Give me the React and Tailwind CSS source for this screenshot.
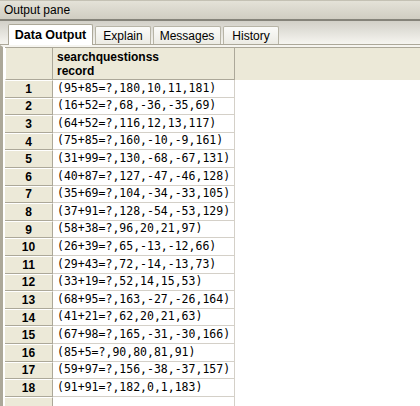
const rows = [
  "(95+85=?,180,10,11,181)",
  "(16+52=?,68,-36,-35,69)",
  "(64+52=?,116,12,13,117)",
  "(75+85=?,160,-10,-9,161)",
  "(31+99=?,130,-68,-67,131)",
  "(40+87=?,127,-47,-46,128)",
  "(35+69=?,104,-34,-33,105)",
  "(37+91=?,128,-54,-53,129)",
  "(58+38=?,96,20,21,97)",
  "(26+39=?,65,-13,-12,66)",
  "(29+43=?,72,-14,-13,73)",
  "(33+19=?,52,14,15,53)",
  "(68+95=?,163,-27,-26,164)",
  "(41+21=?,62,20,21,63)",
  "(67+98=?,165,-31,-30,166)",
  "(85+5=?,90,80,81,91)",
  "(59+97=?,156,-38,-37,157)",
  "(91+91=?,182,0,1,183)",
];

const tabs = [
  { label: "Explain", w: "w-[56px]" },
  { label: "Messages", w: "w-[68px]" },
  { label: "History", w: "w-[56px]" },
];

export default function App() {
  return (
    <div className="w-[420px] h-[406px] overflow-hidden bg-white font-['Liberation_Sans',sans-serif] text-black flex flex-col">
      {/* title bar */}
      <div className="h-[21px] shrink-0 bg-gradient-to-b from-[#e4e2d8] to-[#d0cdc2] border-t border-[#c4c1b4] border-b-2 border-b-[#85837a] flex items-center pl-[4px] text-[12px]">
        Output pane
      </div>

      {/* tab strip */}
      <div className="h-[24px] shrink-0 bg-gradient-to-b from-[#d2d0c8] to-[#f6f5f0] border-b border-[#aca899] flex items-end pl-[8px] text-[12px]">
        <div className="w-[85px] h-[21px] bg-white border border-b-0 border-[#aca899] rounded-t-[2px] flex items-center justify-center font-bold text-[12.5px] mb-[-1px] relative">
          Data Output
        </div>
        {tabs.map((t) => (
          <div
            key={t.label}
            className={`${t.w} h-[18px] ml-[2px] bg-gradient-to-b from-[#fbfbf9] to-[#ecebe4] border border-b-0 border-[#b7b4a6] rounded-t-[2px] flex items-center justify-center`}
          >
            {t.label}
          </div>
        ))}
      </div>

      {/* grid */}
      <div className="flex-1 flex border-t-2 border-t-[#f6f5f0] border-l-[3px] border-l-[#aca899] pl-[2px]">
        <div className="flex-1 flex flex-col border-t border-[#aca899]">
          <div className="h-[32px] shrink-0 flex bg-[#ece9d8]">
            <div className="w-[48px] border-r border-b border-[#aca899] border-l border-l-white" />
            <div className="w-[182px] border-r border-b border-[#aca899] pl-[4px] pt-[2px] font-bold text-[12px] leading-[14px]">
              searchquestionss
              <br />
              record
            </div>
            <div className="flex-1" />
          </div>
          {rows.map((r, i) => (
            <div key={i} className="h-[17.6px] shrink-0 flex">
              <div className="w-[48px] bg-[#ece9d8] border-r border-b border-[#aca899] border-t border-t-white flex items-center justify-center font-bold text-[12px]">
                {i + 1}
              </div>
              <div className="w-[182px] border-r border-b border-[#d4d0c8] flex items-center pl-[4px] font-['DejaVu_Sans_Mono',monospace] text-[11.5px] whitespace-nowrap">
                {r}
              </div>
            </div>
          ))}
          <div className="h-[10px] shrink-0 flex">
            <div className="w-[48px] bg-[#ece9d8] border-r border-[#aca899] border-t border-t-white" />
            <div className="w-[182px] border-r border-[#d4d0c8]" />
          </div>
        </div>
      </div>
    </div>
  );
}
